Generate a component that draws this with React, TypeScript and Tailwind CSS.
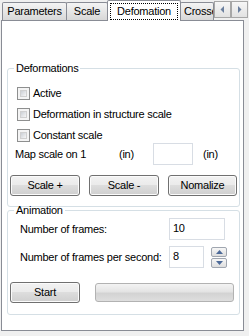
import React from "react";

const btnCls =
  "h-[21px] border border-[#707070] rounded-[3px] bg-[linear-gradient(#f2f2f2,#ebebeb_45%,#dddddd_50%,#cfcfcf)] shadow-[inset_0_0_0_1px_#fbfbfb] flex items-center justify-center text-black";

function Check({ label }: { label: string }) {
  return (
    <div className="flex items-center h-[13px] ml-[9px]">
      <div className="w-[13px] h-[13px] border border-[#8e8f8f] bg-[#f4f4f4] p-[2px]">
        <div className="w-full h-full bg-[linear-gradient(135deg,#cbcfd5,#f6f6f6)] border border-[#d0d0d0]" />
      </div>
      <span className="ml-[3px] leading-[13px]">{label}</span>
    </div>
  );
}

function TabArrow({ dir }: { dir: "l" | "r" }) {
  return (
    <div className="w-[17px] h-[17px] border border-[#a7a7a7] bg-[linear-gradient(#f6f6f6,#e2e2e2)] flex items-center justify-center">
      <svg width="5" height="7" viewBox="0 0 5 7">
        {dir === "l" ? (
          <polygon points="4,0 4,7 0.5,3.5" fill="#6a7f9e" />
        ) : (
          <polygon points="1,0 1,7 4.5,3.5" fill="#6a7f9e" />
        )}
      </svg>
    </div>
  );
}

function SpinBtn({ up }: { up: boolean }) {
  return (
    <div className="w-[16px] h-[10px] border border-[#a0a6b0] rounded-[2px] bg-[linear-gradient(#f7f7f7,#dedede)] flex items-center justify-center">
      <svg width="7" height="4" viewBox="0 0 7 4">
        {up ? (
          <polygon points="0,4 7,4 3.5,0" fill="#4d6a99" />
        ) : (
          <polygon points="0,0 7,0 3.5,4" fill="#4d6a99" />
        )}
      </svg>
    </div>
  );
}

export default function App() {
  const tabCls =
    "mt-[2px] h-[18px] border border-b-0 border-[#898c95] rounded-t-[2px] bg-[linear-gradient(#f4f4f4,#e6e6e6_50%,#d8d8d8)] flex items-center justify-center";
  return (
    <div className="w-[249px] h-[336px] bg-[#f0f0f0] overflow-hidden font-['Liberation_Sans',Arial,sans-serif] text-[11px] tracking-[-0.25px] text-black leading-[13px]">
      {/* tab strip */}
      <div className="flex h-[21px] relative z-10">
        <div className="w-[2px]" />
        <div className={tabCls + " w-[65px]"}>Parameters</div>
        <div className={tabCls + " w-[42px] -ml-px"}>Scale</div>
        <div className="w-[74px] h-[21px] -ml-px border border-b-0 border-[#898c95] rounded-t-[2px] bg-white p-[2px] pb-[1px]">
          <div className="w-full h-full border border-dotted border-black flex items-center justify-center">
            Defomation
          </div>
        </div>
        <div className={tabCls + " w-[34px] -ml-px overflow-hidden justify-start pl-[3px] whitespace-nowrap"}>
          <span className="w-[30px] overflow-hidden">Crosse</span>
        </div>
        <div className="flex mt-[1px]">
          <TabArrow dir="l" />
          <TabArrow dir="r" />
        </div>
      </div>

      {/* panel */}
      <div className="-mt-px ml-[1px] w-[243px] h-[311px] border border-[#898c95] bg-white flex flex-col">
        {/* Deformations */}
        <fieldset className="ml-[5px] mt-[41px] w-[233px] border border-[#d5dfe5] rounded-[3px] pb-[10px]">
          <legend className="ml-[6px] px-[2px] leading-[13px]">Deformations</legend>
          <div className="flex flex-col gap-[8px] mt-[12px]">
            <Check label="Active" />
            <Check label="Deformation in structure scale" />
            <Check label="Constant scale" />
          </div>
          <div className="flex items-center h-[22px] mt-[1px] ml-[7px]">
            <span className="w-[104px]">Map scale on 1</span>
            <span className="w-[34px]">(in)</span>
            <div className="w-[40px] h-[22px] border border-[#d8dde4] bg-white" />
            <span className="ml-[10px]">(in)</span>
          </div>
          <div className="flex gap-[9px] mt-[10px] ml-[2px]">
            <div className={btnCls + " w-[70px]"}>Scale +</div>
            <div className={btnCls + " w-[70px]"}>Scale -</div>
            <div className={btnCls + " w-[69px]"}>Nomalize</div>
          </div>
        </fieldset>

        {/* Animation */}
        <fieldset className="ml-[5px] -mt-[3px] w-[233px] border border-[#d5dfe5] rounded-[3px] pb-[11px]">
          <legend className="ml-[6px] px-[2px] leading-[13px]">Animation</legend>
          <div className="flex items-center h-[22px] mt-[1px] ml-[12px]">
            <span className="w-[149px]">Number of frames:</span>
            <div className="w-[56px] h-[22px] border border-[#d8dde4] bg-white px-[3px] pt-[3px]">10</div>
          </div>
          <div className="flex items-center h-[22px] mt-[6px] ml-[12px]">
            <span className="w-[149px] whitespace-nowrap">Number of frames per second:</span>
            <div className="w-[35px] h-[22px] border border-[#d8dde4] bg-white px-[3px] pt-[3px]">8</div>
            <div className="ml-[7px] flex flex-col gap-px">
              <SpinBtn up />
              <SpinBtn up={false} />
            </div>
          </div>
          <div className="flex items-center mt-[14px] ml-[2px]">
            <div className={btnCls + " w-[70px] h-[20px]"}>Start</div>
            <div className="ml-[15px] w-[139px] h-[19px] border border-[#b2b2b2] rounded-[3px] bg-[linear-gradient(#f3f3f3,#e4e4e4_45%,#d3d3d3_55%,#dedede)]" />
          </div>
        </fieldset>
      </div>
    </div>
  );
}
